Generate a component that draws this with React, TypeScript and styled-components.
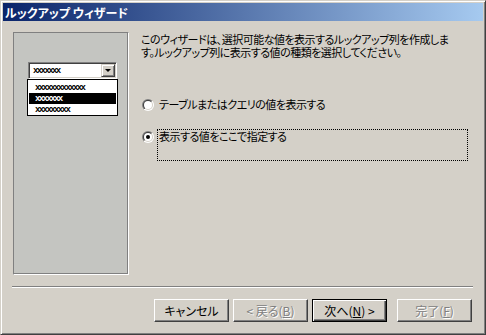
import styled, { createGlobalStyle } from "styled-components";

const GlobalStyle = createGlobalStyle`
  html, body {
    margin: 0;
    padding: 0;
    background: #d4d0c8;
  }
  body {
    font-family: "Noto Sans CJK JP", sans-serif;
    font-size: 12px;
  }
`;

const Window = styled.div`
  box-sizing: border-box;
  width: 486px;
  height: 335px;
  padding: 2px;
  display: flex;
  flex-direction: column;
  background: #d4d0c8;
  border: 1px solid;
  border-color: #d4d0c8 #404040 #404040 #d4d0c8;
  box-shadow: inset 1px 1px #fff, inset -1px -1px #808080;
  font-family: "Noto Sans CJK JP", sans-serif;
  font-feature-settings: "palt";
  font-size: 12px;
  color: #000;
`;

const TitleBar = styled.div`
  flex-shrink: 0;
  height: 18px;
  display: flex;
  align-items: center;
  padding-left: 2px;
  background: linear-gradient(to right, #0a246a, #a6caf0);
  color: #fff;
  font-weight: bold;
  white-space: nowrap;
`;

const Body = styled.div`
  display: flex;
  padding: 11px 0 0 10px;
`;

const Sidebar = styled.div`
  box-sizing: border-box;
  flex-shrink: 0;
  width: 116px;
  height: 243px;
  padding: 29px 0 0 13px;
  background: #c4c5c1;
  border: 1px solid;
  border-color: #808080 #fff #fff #808080;
  box-shadow: inset -1px -1px #808080;
`;

const Combo = styled.div`
  box-sizing: border-box;
  width: 89px;
  height: 17px;
  margin-left: 1px;
  display: flex;
  align-items: center;
  justify-content: space-between;
  background: #fff;
  border: 1px solid;
  border-color: #808080 #fff #fff #808080;
  box-shadow: inset 1px 1px #404040, inset -1px -1px #d4d0c8;
  padding: 1px;
`;

const Dummy = styled.span`
  font-family: "Liberation Mono", monospace;
  font-weight: bold;
  font-size: 9px;
  letter-spacing: -1.6px;
  line-height: 10px;
  padding-left: 3px;
`;

const DropButton = styled.div`
  box-sizing: border-box;
  width: 14px;
  height: 13px;
  display: flex;
  align-items: center;
  justify-content: center;
  background: #d4d0c8;
  border: 1px solid;
  border-color: #d4d0c8 #404040 #404040 #d4d0c8;
  box-shadow: inset 1px 1px #fff, inset -1px -1px #808080;

  &::after {
    content: "";
    width: 0;
    height: 0;
    border-left: 3px solid transparent;
    border-right: 3px solid transparent;
    border-top: 3px solid #000;
  }
`;

const List = styled.div`
  box-sizing: border-box;
  width: 91px;
  height: 37px;
  padding: 2px 1px 0;
  background: #fff;
  border: 1px solid #000;
`;

const ListRow = styled.div<{ $selected?: boolean }>`
  height: 11px;
  display: flex;
  align-items: center;
  padding-left: 3px;
  background: ${({ $selected }) => ($selected ? "#000" : "transparent")};
  color: ${({ $selected }) => ($selected ? "#fff" : "#000")};
`;

const Content = styled.div`
  margin: 1px 0 0 12px;
  display: flex;
  flex-direction: column;
  font-size: 11px;
  letter-spacing: -0.5px;
`;

const Intro = styled.p`
  margin: 0;
  line-height: 13px;
  white-space: nowrap;
`;

const Options = styled.div`
  margin-top: 38px;
  display: flex;
  flex-direction: column;
`;

const Option = styled.div`
  display: flex;
  align-items: flex-start;
`;

const RadioSlot = styled.div`
  width: 16px;
  padding: 2px 0 0 1px;
  box-sizing: border-box;
  display: flex;
`;

const OptionLabel = styled.div<{ $focused?: boolean }>`
  box-sizing: border-box;
  width: 311px;
  height: 32px;
  padding: 0 1px;
  line-height: 13px;
  white-space: nowrap;
  border: 1px dotted ${({ $focused }) => ($focused ? "#000" : "transparent")};
`;

const Separator = styled.div`
  margin: 11px 10px 0 9px;
  height: 0;
  border-top: 1px solid #808080;
  border-bottom: 1px solid #fff;
`;

const Footer = styled.div`
  margin-top: 11px;
  padding-right: 11px;
  display: flex;
  justify-content: flex-end;
  gap: 4px;
`;

const Button = styled.div<{ $default?: boolean; $disabled?: boolean; $spaced?: boolean }>`
  box-sizing: border-box;
  width: 75px;
  height: 23px;
  display: flex;
  align-items: center;
  justify-content: center;
  margin-left: ${({ $spaced }) => ($spaced ? "6px" : "0")};
  background: #d4d0c8;
  white-space: nowrap;
  line-height: 13px;
  color: ${({ $disabled }) => ($disabled ? "#808080" : "#000")};
  text-shadow: ${({ $disabled }) => ($disabled ? "1px 1px #fff" : "none")};
  border: 1px solid;
  border-color: ${({ $default }) =>
    $default ? "#000" : "#fff #404040 #404040 #fff"};
  box-shadow: ${({ $default }) =>
    $default
      ? "inset 1px 1px #fff, inset -1px -1px #404040, inset -2px -2px #808080"
      : "inset -1px -1px #808080"};

  u {
    text-decoration-thickness: 1px;
    text-underline-offset: 1px;
  }
`;

const Radio = ({ checked }: { checked?: boolean }) => (
  <svg width="12" height="12" viewBox="0 0 12 12">
    <defs>
      <linearGradient id="radioOuter" x1="0" y1="0" x2="1" y2="1">
        <stop offset="0.5" stopColor="#808080" />
        <stop offset="0.5" stopColor="#ffffff" />
      </linearGradient>
      <linearGradient id="radioInner" x1="0" y1="0" x2="1" y2="1">
        <stop offset="0.5" stopColor="#404040" />
        <stop offset="0.5" stopColor="#d4d0c8" />
      </linearGradient>
    </defs>
    <circle cx="6" cy="6" r="6" fill="url(#radioOuter)" />
    <circle cx="6" cy="6" r="5" fill="url(#radioInner)" />
    <circle cx="6" cy="6" r="4" fill="#fff" />
    {checked && <circle cx="6" cy="6" r="2" fill="#000" />}
  </svg>
);

export default function App() {
  return (
    <>
      <GlobalStyle />
      <Window>
        <TitleBar>ルックアップ ウィザード</TitleBar>
        <Body>
          <Sidebar>
            <Combo>
              <Dummy>xxxxxxx</Dummy>
              <DropButton />
            </Combo>
            <List>
              <ListRow>
                <Dummy>xxxxxxxxxxxxx</Dummy>
              </ListRow>
              <ListRow $selected>
                <Dummy>xxxxxxx</Dummy>
              </ListRow>
              <ListRow>
                <Dummy>xxxxxxxxx</Dummy>
              </ListRow>
            </List>
          </Sidebar>
          <Content>
            <Intro>
              このウィザードは、選択可能な値を表示するルックアップ列を作成しま
              <br />
              す。ルックアップ列に表示する値の種類を選択してください。
            </Intro>
            <Options>
              <Option>
                <RadioSlot>
                  <Radio />
                </RadioSlot>
                <OptionLabel>テーブルまたはクエリの値を表示する</OptionLabel>
              </Option>
              <Option>
                <RadioSlot>
                  <Radio checked />
                </RadioSlot>
                <OptionLabel $focused>表示する値をここで指定する</OptionLabel>
              </Option>
            </Options>
          </Content>
        </Body>
        <Separator />
        <Footer>
          <Button>キャンセル</Button>
          <Button $disabled>
            &lt; 戻る(<u>B</u>)
          </Button>
          <Button $default>
            次へ(<u>N</u>) &gt;
          </Button>
          <Button $disabled $spaced>
            完了(<u>F</u>)
          </Button>
        </Footer>
      </Window>
    </>
  );
}
